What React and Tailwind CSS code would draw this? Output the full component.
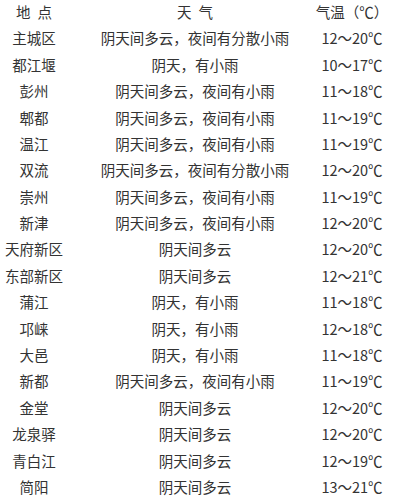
const rows = [
  ["主城区", "阴天间多云，夜间有分散小雨", "12～20℃"],
  ["都江堰", "阴天，有小雨", "10～17℃"],
  ["彭州", "阴天间多云，夜间有小雨", "11～18℃"],
  ["郫都", "阴天间多云，夜间有小雨", "11～19℃"],
  ["温江", "阴天间多云，夜间有小雨", "11～19℃"],
  ["双流", "阴天间多云，夜间有分散小雨", "12～20℃"],
  ["崇州", "阴天间多云，夜间有小雨", "11～19℃"],
  ["新津", "阴天间多云，夜间有小雨", "12～20℃"],
  ["天府新区", "阴天间多云", "12～20℃"],
  ["东部新区", "阴天间多云", "12～21℃"],
  ["蒲江", "阴天，有小雨", "11～18℃"],
  ["邛崃", "阴天，有小雨", "12～18℃"],
  ["大邑", "阴天，有小雨", "11～18℃"],
  ["新都", "阴天间多云，夜间有小雨", "11～19℃"],
  ["金堂", "阴天间多云", "12～20℃"],
  ["龙泉驿", "阴天间多云", "12～20℃"],
  ["青白江", "阴天间多云", "12～19℃"],
  ["简阳", "阴天间多云", "13～21℃"],
];

function Row({ place, weather, temp }) {
  return (
    <div className="grid grid-cols-[68px_254px_60px] h-[26.4px] items-center">
      <div className="flex justify-center whitespace-nowrap">{place}</div>
      <div className="flex justify-center whitespace-nowrap">{weather}</div>
      <div className="flex justify-center whitespace-nowrap">{temp}</div>
    </div>
  );
}

const tempHeader = (
  <span className="flex">
    气温
    <span className="inline-block w-[14.5px] text-right">（</span>
    ℃
    <span className="inline-block w-[14.5px] text-left">）</span>
  </span>
);

export default function App() {
  return (
    <div
      lang="zh-CN"
      className="w-[400px] h-[497px] bg-white text-[#333] text-[14.5px] leading-none overflow-hidden"
      style={{ fontFamily: '"Noto Sans CJK SC", "Noto Sans", sans-serif' }}
    >
      <div className="-mt-[1px]">
        <Row place={"地\u2002点"} weather={"天\u2002气"} temp={tempHeader} />
        {rows.map((r) => (
          <Row key={r[0]} place={r[0]} weather={r[1]} temp={r[2]} />
        ))}
      </div>
    </div>
  );
}
